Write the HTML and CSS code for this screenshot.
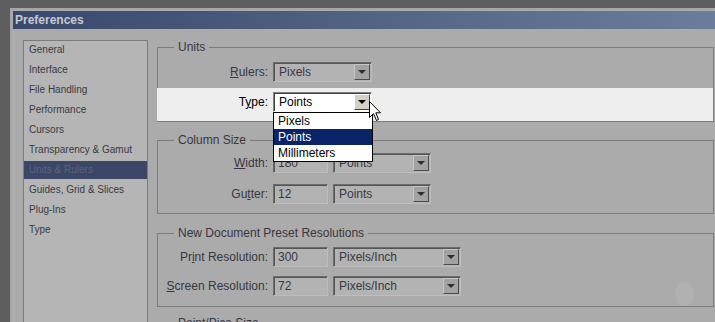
FILE: index.html
```html
<!DOCTYPE html>
<html lang="en">
<head>
    <meta charset="UTF-8">
    <meta name="viewport" content="width=device-width, initial-scale=1.0">
    <title>Preferences</title>
    <link rel="stylesheet" href="styles.css">
</head>
<body>
    <div class="window">
        <div class="titlebar">Preferences</div>

        <div class="content">
            <ul class="sidebar">
                <li>General</li>
                <li>Interface</li>
                <li>File Handling</li>
                <li>Performance</li>
                <li>Cursors</li>
                <li>Transparency &amp; Gamut</li>
                <li class="selected">Units &amp; Rulers</li>
                <li>Guides, Grid &amp; Slices</li>
                <li>Plug-Ins</li>
                <li>Type</li>
            </ul>

            <div class="panel">
                <fieldset class="group units">
                    <legend>Units</legend>
                    <div class="row">
                        <span class="label"><u>R</u>ulers:</span>
                        <div class="select w-99"><span class="value">Pixels</span><i class="arrow"></i></div>
                    </div>
                    <div class="row active">
                        <span class="label">T<u>y</u>pe:</span>
                        <div class="select w-99">
                            <span class="value">Points</span><i class="arrow"></i>
                            <ul class="menu">
                                <li>Pixels</li>
                                <li class="on">Points</li>
                                <li>Millimeters</li>
                            </ul>
                        </div>
                    </div>
                </fieldset>

                <fieldset class="group columns">
                    <legend>Column Size</legend>
                    <div class="row">
                        <span class="label"><u>W</u>idth:</span>
                        <div class="field">180</div>
                        <div class="select w-98"><span class="value">Points</span><i class="arrow"></i></div>
                    </div>
                    <div class="row">
                        <span class="label">Gu<u>t</u>ter:</span>
                        <div class="field">12</div>
                        <div class="select w-98"><span class="value">Points</span><i class="arrow"></i></div>
                    </div>
                </fieldset>

                <fieldset class="group resolutions">
                    <legend>New Document Preset Resolutions</legend>
                    <div class="row">
                        <span class="label">Pr<u>i</u>nt Resolution:</span>
                        <div class="field">300</div>
                        <div class="select w-128"><span class="value">Pixels/Inch</span><i class="arrow"></i></div>
                    </div>
                    <div class="row">
                        <span class="label"><u>S</u>creen Resolution:</span>
                        <div class="field">72</div>
                        <div class="select w-128"><span class="value">Pixels/Inch</span><i class="arrow"></i></div>
                    </div>
                </fieldset>

                <fieldset class="group pica">
                    <legend>Point/Pica Size</legend>
                </fieldset>
            </div>
        </div>
    </div>

    <!-- mouse pointer resting on the Type dropdown -->
    <svg class="pointer" width="13" height="21" viewBox="0 0 13 21">
        <path d="M0.5 0.5 L0.5 16.5 L4.5 12.5 L7.5 19.5 L9.5 18.5 L6.8 11.8 L11.5 11.8 Z" fill="#fff" stroke="#000" stroke-width="1"/>
    </svg>

    <div class="smudge"></div>
</body>
</html>
```

FILE: styles.css
```css
body {
    margin: 0;
    height: 322px;
    overflow: hidden;
    background-color: #5e5e5e;
    font-family: "Liberation Sans", Arial, sans-serif;
    font-size: 12px;
    color: #37373f;
}

.window {
    margin: 8px 0 0 10px;
    width: 706px;
    height: 330px;
    box-sizing: border-box;
    border-top: 2px solid #a6a6a6;
    border-left: 2px solid #a6a6a6;
    padding: 1px 0 0 1px;
    background-color: #ababab;
}

.titlebar {
    height: 18px;
    line-height: 18px;
    padding-left: 2px;
    font-weight: bold;
    color: #c6c9d3;
    background: linear-gradient(to right, #3a486b, #6b7d9b);
}

.content {
    display: flex;
    padding: 11px 0 0 10px;
}

.sidebar {
    list-style: none;
    margin: 0 9px 0 0;
    padding: 0;
    width: 125px;
    height: 300px;
    box-sizing: border-box;
    border: 1px solid #7b7b7b;
    background-color: #b5b5b5;
    font-size: 10px;
    color: #383a44;
}

.sidebar li {
    height: 18px;
    line-height: 18px;
    margin-bottom: 2px;
    padding-left: 5px;
}

.sidebar li.selected {
    background-color: #3c4767;
    color: #5b6380;
}

.panel {
    flex: 1;
    padding-right: 2px;
}

.group {
    margin: 0;
    padding: 0;
    border: 1px solid #7c7c7c;
    min-width: 0;
}

.group legend {
    margin-left: 16px;
    padding: 0 4px;
    line-height: 14px;
}

.units {
    padding-top: 8px;
}

.columns {
    margin-top: 11px;
    padding: 6px 0 9px;
}

.resolutions {
    margin-top: 12px;
    padding: 7px 0 10px;
}

.pica {
    margin-top: 9px;
    height: 40px;
}

.row {
    display: flex;
    align-items: center;
    gap: 5px;
}

.units .row {
    margin-bottom: 6px;
}

.columns .row + .row {
    margin-top: 11px;
}

.resolutions .row + .row {
    margin-top: 9px;
}

.units .row.active {
    margin: 0 0 0 -1px;
    padding: 4px 0 9px 1px;
    background-color: #eeeeee;
    color: #000;
}

.label {
    width: 110px;
    margin-right: 0;
    text-align: right;
    white-space: nowrap;
}

.select,
.field {
    position: relative;
    display: flex;
    height: 20px;
    box-sizing: border-box;
    border: 1px solid;
    border-color: #6b6b6b #bdbdbd #bdbdbd #6b6b6b;
    box-shadow: inset 1px 1px 0 #555555;
    background-color: #b3b3b3;
    color: #383844;
}

.field {
    width: 55px;
    padding-left: 4px;
    line-height: 18px;
}

.select .value {
    flex: 1;
    padding-left: 5px;
    line-height: 18px;
}

.w-99 { width: 99px; }
.w-98 { width: 98px; }
.w-128 { width: 128px; }

.arrow {
    position: relative;
    width: 16px;
    height: 16px;
    margin: 1px 1px 0 0;
    box-sizing: border-box;
    border: 1px solid;
    border-color: #c6c6c6 #4b4b4b #4b4b4b #c6c6c6;
    background-color: #a2a2a2;
}

.arrow::after {
    content: "";
    position: absolute;
    left: 3px;
    top: 5px;
    border-left: 4px solid transparent;
    border-right: 4px solid transparent;
    border-top: 4px solid #2d2d2d;
}

.active .select {
    border-color: #808080 #ffffff #ffffff #808080;
    box-shadow: inset 1px 1px 0 #404040;
    background-color: #ffffff;
    color: #000;
}

.active .arrow {
    border-color: #ffffff #404040 #404040 #ffffff;
    background-color: #d4d0c8;
}

.active .arrow::after {
    border-top-color: #000;
}

.menu {
    position: absolute;
    left: -1px;
    top: calc(100% + 1px);
    z-index: 2;
    list-style: none;
    margin: 0;
    padding: 0;
    width: 100px;
    box-sizing: border-box;
    border: 1px solid #000;
    background-color: #fff;
    color: #000;
}

.menu li {
    height: 16px;
    line-height: 16px;
    padding-left: 4px;
}

.menu li.on {
    background-color: #0a246a;
    color: #fff;
}

.pointer {
    position: absolute;
    left: 369px;
    top: 101px;
    z-index: 3;
}

.smudge {
    position: absolute;
    left: 675px;
    top: 282px;
    width: 19px;
    height: 24px;
    border-radius: 50%;
    background-color: #b1b1b1;
}
```
